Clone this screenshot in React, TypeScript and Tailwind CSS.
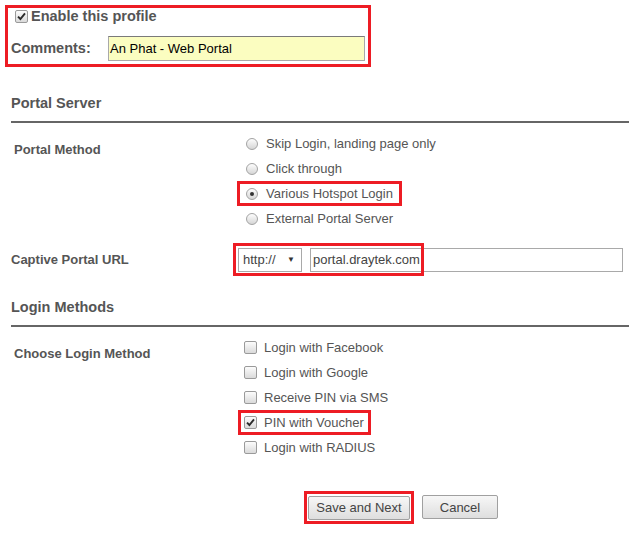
import { useState } from "react";

const PORTAL_METHODS = [
  "Skip Login, landing page only",
  "Click through",
  "Various Hotspot Login",
  "External Portal Server",
];

const LOGIN_METHODS = [
  { label: "Login with Facebook", checked: false },
  { label: "Login with Google", checked: false },
  { label: "Receive PIN via SMS", checked: false },
  { label: "PIN with Voucher", checked: true },
  { label: "Login with RADIUS", checked: false },
];

function CheckBox({ checked }: { checked: boolean }) {
  return (
    <span className="w-[13px] h-[13px] shrink-0 rounded-[2px] border border-[#9a9a9a] bg-gradient-to-b from-[#fcfcfc] to-[#dadada] flex items-center justify-center">
      {checked && (
        <svg width="9" height="9" viewBox="0 0 9 9" aria-hidden>
          <path
            d="M1 4.6 L3.4 7 L8 1.4"
            fill="none"
            stroke="#2b2b2b"
            strokeWidth="1.9"
          />
        </svg>
      )}
    </span>
  );
}

function Radio({ checked }: { checked: boolean }) {
  return (
    <span className="w-[12px] h-[12px] shrink-0 rounded-full border border-[#a3a3a3] bg-gradient-to-b from-[#fdfdfd] to-[#d6d6d6] flex items-center justify-center">
      {checked && <span className="w-[4px] h-[4px] rounded-full bg-[#333]" />}
    </span>
  );
}

function SectionTitle({ children }: { children: string }) {
  return (
    <div className="ml-[11px]">
      <h2 className="text-[14.5px] leading-[17px] font-bold text-[#555]">
        {children}
      </h2>
      <div className="mt-[9px] h-[2px] bg-[#666]" />
    </div>
  );
}

export default function App() {
  const [method, setMethod] = useState(2);
  const [logins, setLogins] = useState(LOGIN_METHODS.map((m) => m.checked));

  return (
    <div className="w-[629px] h-[533px] bg-white text-[#555] font-['Liberation_Sans',Arial,sans-serif] overflow-hidden">
      <div className="ml-[5px] mt-[5px] w-[366px] h-[62px] border-[3px] border-[#ed1c24]">
        <div className="h-[17px] flex items-center gap-[3px] pl-[7px]">
          <CheckBox checked />
          <span className="text-[14.5px] leading-[17px] font-bold">
            Enable this profile
          </span>
        </div>
        <div className="mt-[11px] flex items-center pl-[3px]">
          <span className="w-[97px] text-[14.5px] leading-[17px] font-bold">
            Comments:
          </span>
          <div className="w-[257px] h-[25px] bg-[#fbfdc0] border border-[#a9a9a9] border-t-[#7a7a7a] flex items-center pl-[1px] text-[13px] text-black">
            An Phat - Web Portal
          </div>
        </div>
      </div>

      <div className="mt-[28px]">
        <SectionTitle>Portal Server</SectionTitle>
      </div>

      <div className="mt-[8px] flex">
        <div className="w-[237px] pl-[14px] pt-[11px] text-[13px] leading-[16px] font-bold">
          Portal Method
        </div>
        <div className="flex flex-col items-start">
          {PORTAL_METHODS.map((m, i) => (
            <button
              type="button"
              key={m}
              onClick={() => setMethod(i)}
              className={`h-[25px] flex items-center gap-[8px] pl-[6px] pr-[6px] border-[3px] text-[13px] text-left ${
                i === 2 ? "border-[#ed1c24]" : "border-transparent"
              }`}
            >
              <Radio checked={method === i} />
              {m}
            </button>
          ))}
        </div>
      </div>

      <div className="mt-[12px] flex items-center h-[33px]">
        <div className="w-[233px] pl-[11px] text-[13px] leading-[16px] font-bold">
          Captive Portal URL
        </div>
        <div className="relative flex items-center gap-[8px] pl-[5px] h-[33px]">
          <div className="w-[64px] h-[24px] border border-[#a9a9a9] bg-white flex items-center justify-between pl-[4px] pr-[6px] text-[13px] text-[#444]">
            <span>http://</span>
            <span className="text-[8px] text-[#333]">▼</span>
          </div>
          <div className="w-[313px] h-[24px] border border-[#a9a9a9] bg-white flex items-center pl-[2px] text-[13px] text-[#444]">
            portal.draytek.com
          </div>
          <div className="absolute left-0 top-0 w-[191px] h-[33px] border-[3px] border-[#ed1c24]" />
        </div>
      </div>

      <div className="mt-[23px]">
        <SectionTitle>Login Methods</SectionTitle>
      </div>

      <div className="mt-[8px] flex">
        <div className="w-[238px] pl-[14px] pt-[11px] text-[13px] leading-[16px] font-bold">
          Choose Login Method
        </div>
        <div className="flex flex-col items-start">
          {LOGIN_METHODS.map((m, i) => (
            <button
              type="button"
              key={m.label}
              onClick={() =>
                setLogins((v) => v.map((c, j) => (j === i ? !c : c)))
              }
              className={`h-[25px] flex items-center gap-[7px] pl-[3px] pr-[4px] border-[3px] text-[13px] text-left ${
                m.checked ? "border-[#ed1c24]" : "border-transparent"
              }`}
            >
              <CheckBox checked={logins[i]} />
              {m.label}
            </button>
          ))}
        </div>
      </div>

      <div className="mt-[31px] ml-[304px] flex items-center gap-[8px]">
        <div className="border-[3px] border-[#ed1c24] p-[1px]">
          <button
            type="button"
            className="w-[102px] h-[24px] rounded-[2px] border border-[#a0a0a0] bg-gradient-to-b from-[#f7f7f7] to-[#dedede] text-[13px] text-[#444]"
          >
            Save and Next
          </button>
        </div>
        <button
          type="button"
          className="w-[76px] h-[24px] rounded-[2px] border border-[#a0a0a0] bg-gradient-to-b from-[#f7f7f7] to-[#dedede] text-[13px] text-[#444]"
        >
          Cancel
        </button>
      </div>
    </div>
  );
}
